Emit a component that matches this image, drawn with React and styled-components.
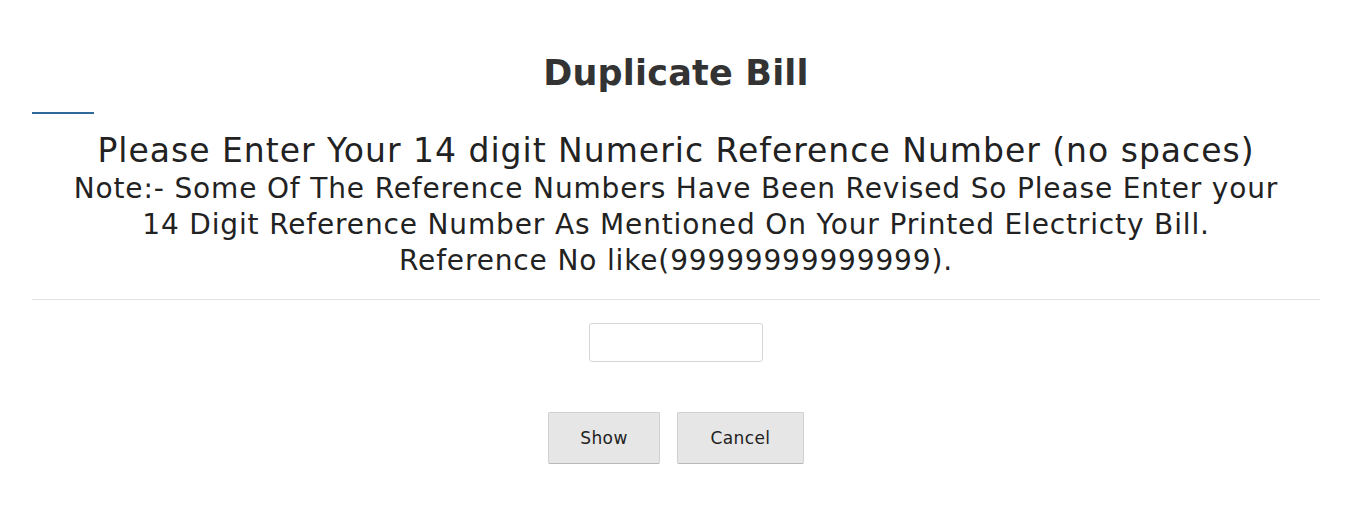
import React from "react";
import styled, { createGlobalStyle } from "styled-components";

const Global = createGlobalStyle`
  html, body { margin: 0; padding: 0; background: #fff; }
  body { font-family: "DejaVu Sans", "Open Sans", sans-serif; color: #222; }
  * { box-sizing: border-box; }
`;

const Page = styled.div`
  padding: 0 32px;
`;

const Title = styled.h2`
  margin: 0;
  padding-top: 50px;
  text-align: center;
  font-size: 35px;
  font-weight: 700;
  line-height: 46px;
  letter-spacing: 0.2px;
  color: #333;
`;

const Accent = styled.div`
  width: 62px;
  height: 2px;
  background: #2f6a9a;
  margin-top: 16px;
`;

const Heading = styled.h3`
  margin: 17px 0 0;
  text-align: center;
  font-size: 33px;
  font-weight: 400;
  line-height: 40px;
  letter-spacing: 1px;
  color: #222;
`;

const Note = styled.p`
  margin: 0;
  text-align: center;
  font-size: 28px;
  line-height: 36px;
  letter-spacing: 0.85px;
  color: #222;
`;

const Divider = styled.hr`
  margin: 20px 0 0;
  border: 0;
  border-top: 1px solid #e3e3e3;
`;

const Form = styled.div`
  display: flex;
  flex-direction: column;
  align-items: center;
  padding-top: 23px;
`;

const Input = styled.input`
  width: 174px;
  height: 39px;
  border: 1px solid #d6d6d6;
  border-radius: 3px;
  background: #fff;
  outline: none;
`;

const Buttons = styled.div`
  display: flex;
  gap: 17px;
  margin-top: 50px;
`;

const Button = styled.button`
  width: ${(p) => p.$w}px;
  height: 52px;
  background: #e6e6e6;
  border: 1px solid #d0d0d0;
  border-bottom-color: #b8b8b8;
  border-radius: 2px;
  font-family: "DejaVu Sans", "Open Sans", sans-serif;
  font-size: 17px;
  letter-spacing: 0.4px;
  color: #222;
`;

export default function App() {
  return (
    <>
      <Global />
      <Page>
        <Title>Duplicate Bill</Title>
        <Accent />
        <Heading>Please Enter Your 14 digit Numeric Reference Number (no spaces)</Heading>
        <Note>
          Note:- Some Of The Reference Numbers Have Been Revised So Please Enter your
          <br />
          14 Digit Reference Number As Mentioned On Your Printed Electricty Bill.
          <br />
          Reference No like(99999999999999).
        </Note>
        <Divider />
        <Form>
          <Input type="text" />
          <Buttons>
            <Button $w={112}>Show</Button>
            <Button $w={127}>Cancel</Button>
          </Buttons>
        </Form>
      </Page>
    </>
  );
}
